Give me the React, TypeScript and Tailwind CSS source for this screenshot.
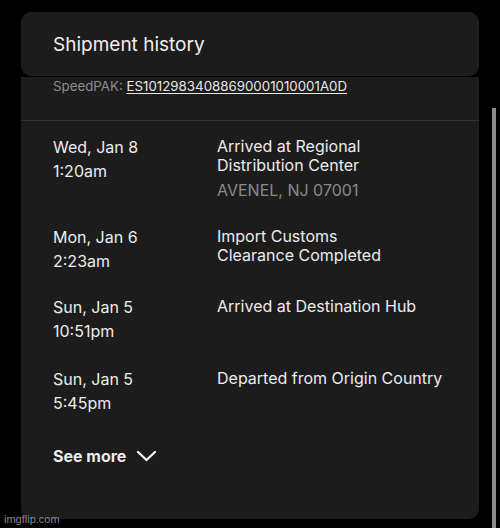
import React from "react";

const rows = [
  { date: "Wed, Jan 8", time: "1:20am", event: ["Arrived at Regional", "Distribution Center"], loc: "AVENEL, NJ 07001", h: "h-[90px]" },
  { date: "Mon, Jan 6", time: "2:23am", event: ["Import Customs", "Clearance Completed"], h: "h-[70px]" },
  { date: "Sun, Jan 5", time: "10:51pm", event: ["Arrived at Destination Hub"], h: "h-[72px]" },
  { date: "Sun, Jan 5", time: "5:45pm", event: ["Departed from Origin Country"], h: "h-[77px]" },
];

export default function App() {
  return (
    <div
      className="relative w-[500px] h-[528px] bg-black overflow-hidden text-[#ececec]"
      style={{ fontFamily: "Inter, 'Noto Sans', sans-serif" }}
    >
      <div className="pt-[12px] pl-[21px] w-[479px]">
        <div className="h-[64px] rounded-[10px] bg-[#1c1c1c] pl-[32px] pt-[21px]">
          <div className="text-[19px] leading-[24px] text-[#f0f0f0]">Shipment history</div>
        </div>
        <div className="bg-[#1c1c1c] rounded-b-[10px] h-[442px] mt-[1px]">
          <div className="pl-[32px] pt-[1px] h-[43px] text-[13.3px] leading-[16px]">
            <span className="text-[#8d8d8d]">SpeedPAK: </span>
            <span className="underline underline-offset-2 text-[#e8e8e8]">ES10129834088690001010001A0D</span>
          </div>
          <div className="h-px bg-[#333333]" />
          <div className="pl-[32px] pt-[14px] flex flex-col">
            {rows.map((r, i) => (
              <div key={i} className={`flex ${r.h}`}>
                <div className="w-[164px] text-[16px]">
                  <div className="leading-[24px]">{r.date}</div>
                  <div className="leading-[24px]">{r.time}</div>
                </div>
                <div className="text-[16px] pt-[2px]">
                  {r.event.map((e, j) => (
                    <div key={j} className="leading-[19px]">{e}</div>
                  ))}
                  {r.loc && <div className="leading-[19px] mt-[6px] text-[#8a8a8a]">{r.loc}</div>}
                </div>
              </div>
            ))}
            <div className="flex items-center gap-[10px] h-[24px]">
              <span className="text-[16px] font-bold">See more</span>
              <svg width="21" height="14" viewBox="0 0 21 14" fill="none">
                <path d="M2 3 L10.5 11 L19 3" stroke="#f0f0f0" strokeWidth="2.4" strokeLinecap="round" strokeLinejoin="round" />
              </svg>
            </div>
          </div>
        </div>
      </div>
      <div className="absolute left-[492px] top-[108px] w-[4px] h-[420px] bg-[#8c8c8c]" />
      <div className="absolute left-[4px] top-[512px] text-[11px] leading-[14px] text-[#8a8a8a]" style={{ fontFamily: "'Liberation Sans', sans-serif" }}>imgflip.com</div>
    </div>
  );
}
